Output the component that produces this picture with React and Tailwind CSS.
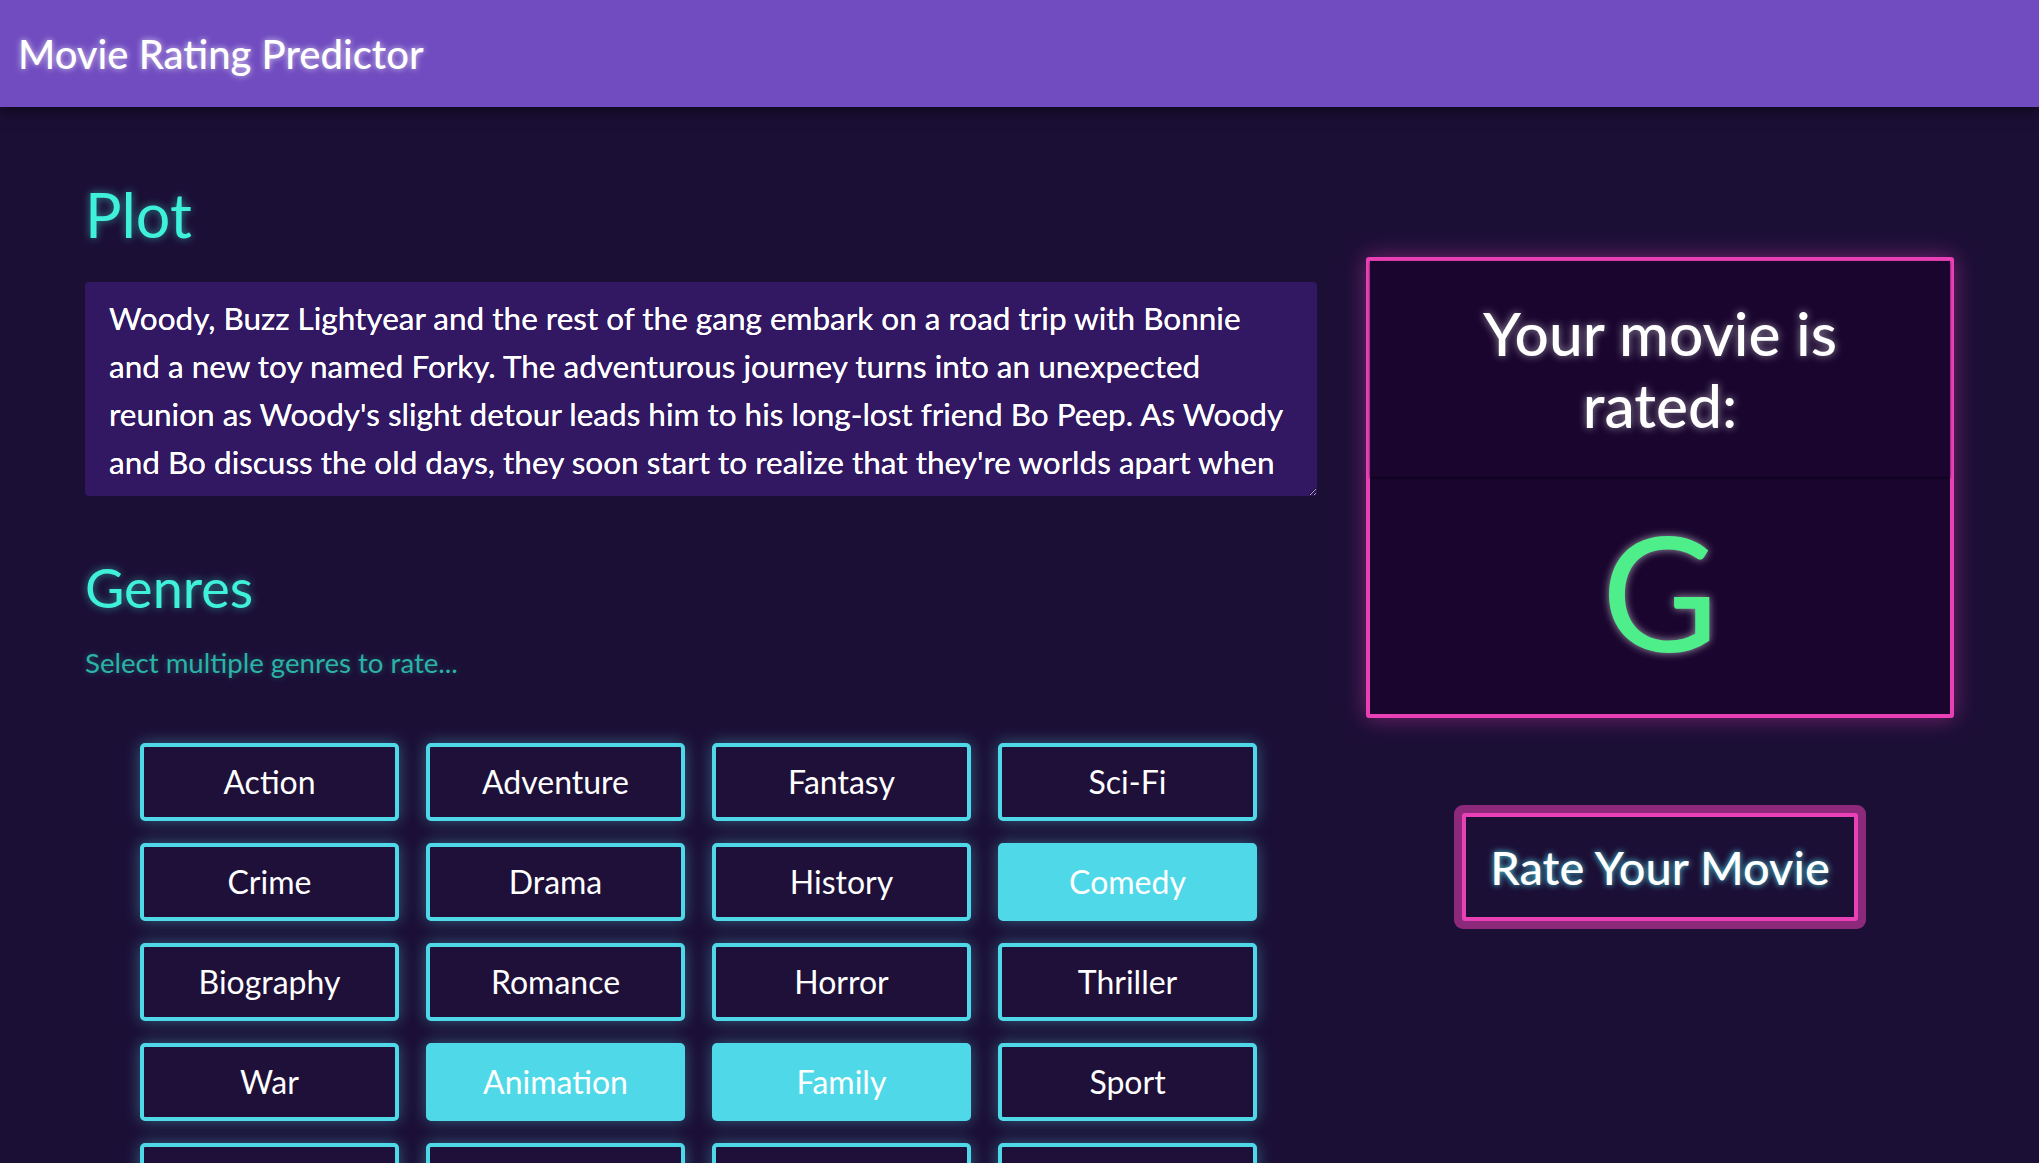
import React, { useState } from 'react';

const PLOT =
  "Woody, Buzz Lightyear and the rest of the gang embark on a road trip with Bonnie and a new toy named Forky. The adventurous journey turns into an unexpected reunion as Woody's slight detour leads him to his long-lost friend Bo Peep. As Woody and Bo discuss the old days, they soon start to realize that they're worlds apart when it comes to what they want from life as a toy.";

const GENRES = [
  'Action', 'Adventure', 'Fantasy', 'Sci-Fi',
  'Crime', 'Drama', 'History', 'Comedy',
  'Biography', 'Romance', 'Horror', 'Thriller',
  'War', 'Animation', 'Family', 'Sport',
  'Music', 'Mystery', 'Western', 'Musical',
];

export default function App() {
  const [plot, setPlot] = useState(PLOT);
  const [selected, setSelected] = useState(['Comedy', 'Animation', 'Family']);

  const toggle = (g) =>
    setSelected((s) => (s.includes(g) ? s.filter((x) => x !== g) : [...s, g]));

  return (
    <div className="min-h-screen bg-[#1c0f36] font-['Lato',sans-serif] text-white">
      {/* Header */}
      <header className="relative z-10 h-[107px] bg-[#704cc0] flex items-center px-[18px] shadow-[0_4px_14px_rgba(0,0,0,0.55)]">
        <h1 className="text-[40px] font-medium leading-none [text-shadow:0_0_6px_rgba(255,255,255,0.7)]">
          Movie Rating Predictor
        </h1>
      </header>

      <main className="flex gap-[49px] px-[85px] pt-[77px] pb-10">
        {/* Left column */}
        <div className="flex-1 min-w-0">
          <h2 className="text-[61px] leading-none text-[#3ff0da] [text-shadow:0_0_8px_rgba(63,240,218,0.55)]">
            Plot
          </h2>
          <textarea
            value={plot}
            onChange={(e) => setPlot(e.target.value)}
            className="mt-[37px] block w-full h-[214px] rounded-[4px] bg-[#321862] px-6 py-3 text-[31.5px] leading-[48px] font-normal text-white outline-none overflow-hidden [text-shadow:0_0_0.6px_#fff]"
          />

          <h2 className="mt-[65px] text-[54px] leading-none text-[#3ff0da] [text-shadow:0_0_8px_rgba(63,240,218,0.55)]">
            Genres
          </h2>
          <p className="mt-[34px] text-[27.6px] leading-none text-[#2bb3a6] [text-shadow:0_0_6px_rgba(43,179,166,0.4)]">
            Select multiple genres to rate...
          </p>

          <div className="mt-[66px] ml-[55px] grid grid-cols-[repeat(4,259px)] gap-x-[27px] gap-y-[22px]">
            {GENRES.map((g) => {
              const on = selected.includes(g);
              return (
                <button
                  key={g}
                  onClick={() => toggle(g)}
                  className={`h-[78px] rounded-[5px] border-4 border-[#4fd9e8] text-[32px] text-white shadow-[0_0_16px_rgba(79,217,232,0.4)] ${
                    on ? 'bg-[#4fd9e8]' : 'bg-[#1e1039]'
                  }`}
                >
                  {g}
                </button>
              );
            })}
          </div>
        </div>

        {/* Right column */}
        <div className="w-[588px] shrink-0 mt-[73px] flex flex-col items-center">
          <div className="w-full border-4 border-[#e940b5] rounded-[3px] bg-[#19052e] shadow-[0_0_22px_rgba(233,64,181,0.45)]">
            <div className="py-9 text-center text-[60.5px] leading-[72px] font-medium [text-shadow:0_0_8px_rgba(255,255,255,0.55)] shadow-[0_1px_2px_rgba(10,0,20,0.9)]">
              Your movie is
              <br />
              rated:
            </div>
            <div className="h-[237px] pt-[33px] text-center text-[160px] leading-none text-[#4eee8a] [text-shadow:0_0_8px_rgba(255,255,255,0.6)]">
              G
            </div>
          </div>

          <button className="mt-[95px] rounded-[3px] border-4 border-[#e940b5] bg-[#1c0f36] px-6 py-[22px] text-[47px] leading-[1.2] font-medium text-white shadow-[0_0_0_8px_rgba(233,64,181,0.55)] [text-shadow:0_0_6px_#4fd9e8]">
            Rate Your Movie
          </button>
        </div>
      </main>
    </div>
  );
}
